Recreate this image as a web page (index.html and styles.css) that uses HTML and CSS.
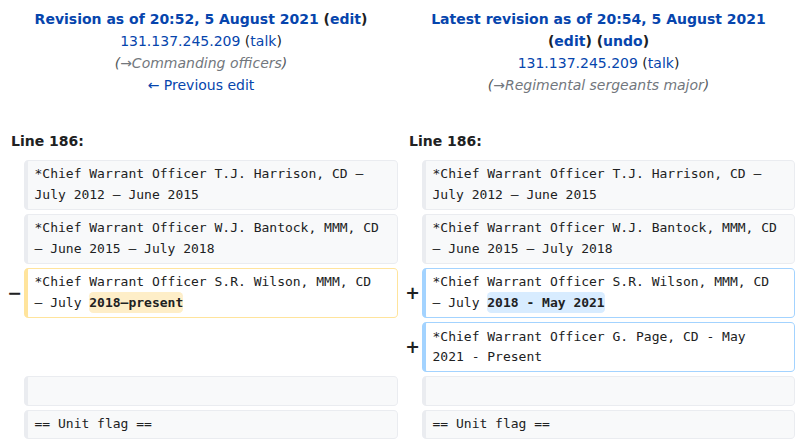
FILE: index.html
```html
<!DOCTYPE html>
<html lang="en">
<head>
<meta charset="utf-8">
<title>Difference between revisions</title>
<link rel="stylesheet" href="styles.css">
</head>
<body>
<div class="diff">
  <div class="title title-old">
    <div class="tl"><strong><a href="#">Revision as of 20:52, 5 August 2021</a> (<a href="#">edit</a>)</strong></div>
    <div class="tl"><a href="#">131.137.245.209</a> (<a href="#">talk</a>)</div>
    <div class="tl comment">(<span class="auto">→Commanding officers</span>)</div>
    <div class="tl"><a href="#">← Previous edit</a></div>
  </div>
  <div class="title title-new">
    <div class="tl"><strong><a href="#">Latest revision as of 20:54, 5 August 2021</a></strong></div>
    <div class="tl"><strong>(<a href="#">edit</a>) (<a href="#">undo</a>)</strong></div>
    <div class="tl"><a href="#">131.137.245.209</a> (<a href="#">talk</a>)</div>
    <div class="tl comment">(<span class="auto">→Regimental sergeants major</span>)</div>
  </div>

  <div class="lineno lineno-old">Line 186:</div>
  <div class="lineno lineno-new">Line 186:</div>

  <div class="marker"></div>
  <div class="cell ctx">*Chief Warrant Officer T.J. Harrison, CD – July 2012 – June 2015</div>
  <div class="marker"></div>
  <div class="cell ctx">*Chief Warrant Officer T.J. Harrison, CD – July 2012 – June 2015</div>

  <div class="marker"></div>
  <div class="cell ctx">*Chief Warrant Officer W.J. Bantock, MMM, CD – June 2015 – July 2018</div>
  <div class="marker"></div>
  <div class="cell ctx">*Chief Warrant Officer W.J. Bantock, MMM, CD – June 2015 – July 2018</div>

  <div class="marker"><span class="sign">−</span></div>
  <div class="cell del">*Chief Warrant Officer S.R. Wilson, MMM, CD – July <del class="chg chg-del">2018–present</del></div>
  <div class="marker"><span class="sign">+</span></div>
  <div class="cell add">*Chief Warrant Officer S.R. Wilson, MMM, CD – July <ins class="chg chg-add">2018 - May 2021</ins></div>

  <div class="empty"></div>
  <div class="marker"><span class="sign">+</span></div>
  <div class="cell add">*Chief Warrant Officer G. Page, CD - May 2021 - Present</div>

  <div class="marker"></div>
  <div class="cell ctx"><br></div>
  <div class="marker"></div>
  <div class="cell ctx"><br></div>

  <div class="marker"></div>
  <div class="cell ctx">== Unit flag ==</div>
  <div class="marker"></div>
  <div class="cell ctx">== Unit flag ==</div>
</div>
</body>
</html>
```

FILE: styles.css
```css
html, body {
  margin: 0;
  padding: 0;
  background: #ffffff;
}

body {
  font-family: "DejaVu Sans", sans-serif;
  font-size: 14px;
  color: #202122;
}

a {
  color: #0645ad;
  text-decoration: none;
}

.diff {
  display: grid;
  grid-template-columns: 16px 374px 16px 373px;
  column-gap: 4px;
  row-gap: 4px;
  padding: 4px;
  width: 799px;
  box-sizing: border-box;
}

.title {
  padding-top: 4px;
  text-align: center;
  line-height: 22px;
}

.title-old { grid-column: 1 / 3; }
.title-new { grid-column: 3 / 5; }

.comment {
  font-style: italic;
  color: #54595d;
}

.comment .auto {
  color: #72777d;
}

.lineno {
  font-weight: bold;
  line-height: 22px;
  padding: 30px 7px 4px;
}

.lineno-old { grid-column: 1 / 3; }
.lineno-new { grid-column: 3 / 5; }

.empty {
  grid-column: 1 / 3;
}

.marker {
  display: flex;
  align-items: center;
  justify-content: flex-end;
  font-weight: bold;
  font-size: 17.5px;
  line-height: 1.2;
  color: #202122;
}

.sign {
  margin-right: -2px;
}

.cell {
  font-family: "DejaVu Sans Mono", monospace;
  font-size: 13px;
  line-height: 1.6;
  padding: 0.25em 14px 0.25em 0.5em;
  border: 1px solid #eaecf0;
  border-left-width: 4px;
  border-radius: 0.33em;
  white-space: pre-wrap;
  word-wrap: break-word;
  color: #202122;
}

.ctx {
  background: #f8f9fa;
  border-color: #eaecf0;
}

.del {
  background: #ffffff;
  border-color: #ffe49c;
}

.add {
  background: #ffffff;
  border-color: #a3d3ff;
}

.chg {
  font-weight: bold;
  text-decoration: none;
  border-radius: 0.33em;
}

.chg-del {
  background: #feeec8;
  box-shadow: 0 -3px 0 #feeec8, 0 3px 0 #feeec8;
}

.chg-add {
  background: #d8ecff;
  box-shadow: 0 -3px 0 #d8ecff, 0 3px 0 #d8ecff;
}
```
